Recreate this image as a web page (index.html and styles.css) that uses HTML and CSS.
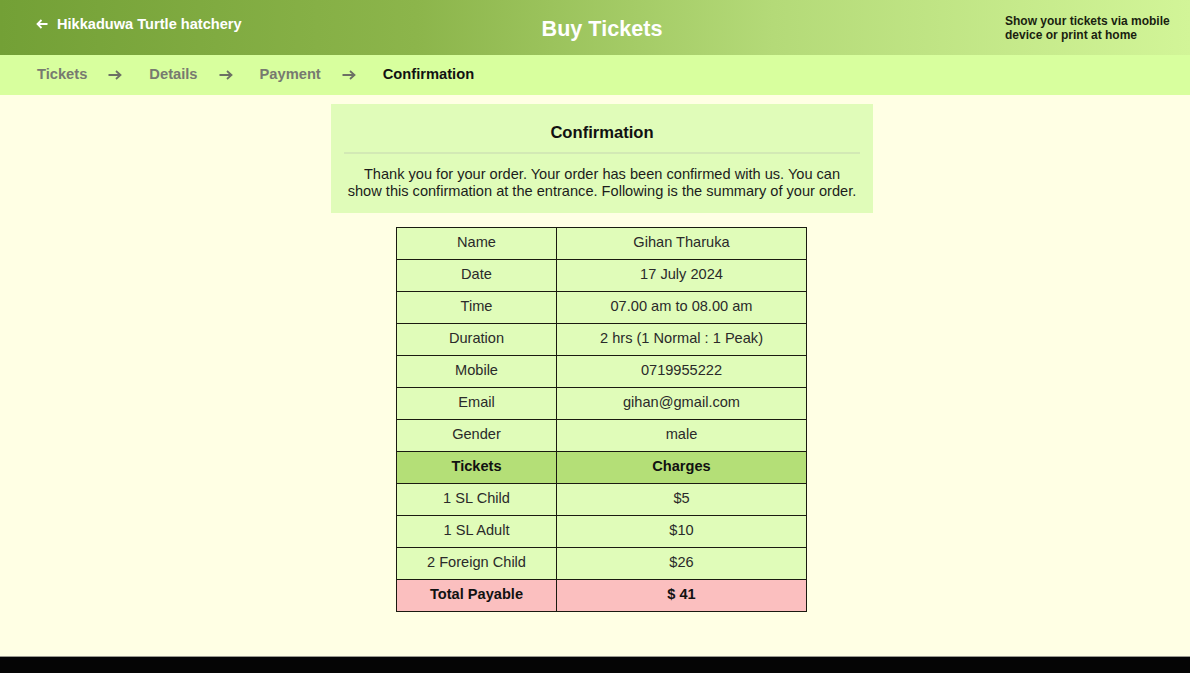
FILE: index.html
```html
<!DOCTYPE html>
<html>
<head>
<meta charset="utf-8">
<link rel="stylesheet" href="styles.css">
</head>
<body>
<div class="page">
  <header class="topbar">
    <div class="brand"><svg class="back" width="12" height="10" viewBox="0 0 12 10"><path d="M11.5 5H1.5M5.5 1L1.5 5L5.5 9" fill="none" stroke="#fff" stroke-width="1.8"/></svg>Hikkaduwa Turtle hatchery</div>
    <div class="title">Buy Tickets</div>
    <div class="note">Show your tickets via mobile device or print at home</div>
  </header>
  <nav class="steps">
    <span class="step">Tickets</span><svg class="arrow" width="14" height="10" viewBox="0 0 14 10"><path d="M0.5 5H12.5M8 1L12.5 5L8 9" fill="none" stroke="currentColor" stroke-width="1.8"/></svg>
    <span class="step">Details</span><svg class="arrow" width="14" height="10" viewBox="0 0 14 10"><path d="M0.5 5H12.5M8 1L12.5 5L8 9" fill="none" stroke="currentColor" stroke-width="1.8"/></svg>
    <span class="step">Payment</span><svg class="arrow" width="14" height="10" viewBox="0 0 14 10"><path d="M0.5 5H12.5M8 1L12.5 5L8 9" fill="none" stroke="currentColor" stroke-width="1.8"/></svg>
    <span class="step active">Confirmation</span>
  </nav>
  <main class="content">
    <section class="card">
      <h2 class="card-title">Confirmation</h2>
      <div class="rule"></div>
      <p class="card-text">Thank you for your order. Your order has been confirmed with us. You can<br>show this confirmation at the entrance. Following is the summary of your order.</p>
    </section>
    <table class="summary">
      <tr><td class="c1">Name</td><td>Gihan Tharuka</td></tr>
      <tr><td class="c1">Date</td><td>17 July 2024</td></tr>
      <tr><td class="c1">Time</td><td>07.00 am to 08.00 am</td></tr>
      <tr><td class="c1">Duration</td><td>2 hrs (1 Normal : 1 Peak)</td></tr>
      <tr><td class="c1">Mobile</td><td>0719955222</td></tr>
      <tr><td class="c1">Email</td><td>gihan@gmail.com</td></tr>
      <tr><td class="c1">Gender</td><td>male</td></tr>
      <tr class="head"><td class="c1">Tickets</td><td>Charges</td></tr>
      <tr><td class="c1">1 SL Child</td><td>$5</td></tr>
      <tr><td class="c1">1 SL Adult</td><td>$10</td></tr>
      <tr><td class="c1">2 Foreign Child</td><td>$26</td></tr>
      <tr class="total"><td class="c1">Total Payable</td><td>$ 41</td></tr>
    </table>
  </main>
  <footer class="footer"></footer>
</div>
</body>
</html>
```

FILE: styles.css
```css
* { box-sizing: border-box; }
html, body { margin: 0; padding: 0; }
body {
  font-family: "Liberation Sans", Arial, sans-serif;
  background: #ffffe4;
  width: 1190px;
  height: 673px;
  overflow: hidden;
}
.page {
  display: flex;
  flex-direction: column;
  height: 673px;
}
.topbar {
  height: 55px;
  display: flex;
  align-items: flex-start;
  background: linear-gradient(90deg, #73a036 0%, #8cb54b 35%, #b4da78 65%, #d2f598 100%);
  position: relative;
}
.brand {
  color: #fff;
  font-weight: bold;
  font-size: 14.6px;
  padding: 16px 0 0 36px;
  width: 320px;
  display: flex;
  align-items: center;
}
.back { margin-right: 9px; flex: none; }
.title {
  position: absolute;
  left: 0; right: 0;
  top: 16px;
  text-align: center;
  padding-left: 14px;
  color: #fff;
  font-weight: bold;
  font-size: 21.6px;
  pointer-events: none;
}
.note {
  margin-left: auto;
  width: 185px;
  padding: 14px 0 0 0;
  font-size: 12px;
  font-weight: bold;
  line-height: 14px;
  color: #1a1f10;
}
.steps {
  height: 40px;
  background: #d8ff9e;
  display: flex;
  align-items: center;
  padding-left: 37px;
  padding-bottom: 2px;
  font-size: 14.7px;
  font-weight: bold;
  color: #777a70;
}
.arrow {
  margin: 1px 27px 0 21px;
  color: #6c7064;
  flex: none;
}
.step.active { color: #111; }
.content {
  flex: 1;
  display: flex;
  flex-direction: column;
  align-items: center;
  padding: 9px 0 0 14px;
}
.card {
  width: 542px;
  background: #e0fcb9;
  padding: 19px 8px 13px;
  text-align: center;
}
.card-title {
  margin: 0;
  font-size: 16.6px;
  font-weight: bold;
  color: #111;
  line-height: 20px;
}
.rule {
  height: 2px;
  background: #d3e9b5;
  margin: 9px 5px 12px;
}
.card-text {
  margin: 0;
  font-size: 14.6px;
  line-height: 17px;
  color: #1c1c1c;
  white-space: nowrap;
}
.summary {
  margin-top: 14px;
  margin-right: 1px;
  border-collapse: collapse;
  width: 411px;
  font-size: 14.6px;
  color: #2a2a2a;
}
.summary td {
  border: 1px solid #1a1a10;
  background: #e0fcb9;
  height: 32px;
  padding: 0 0 4px;
  text-align: center;
}
.summary td.c1 { width: 160px; }
.summary .head td { background: #b4df77; font-weight: bold; color: #111; }
.summary .total td { background: #fbbfbf; font-weight: bold; color: #111; }
.footer {
  margin-top: auto;
  height: 17px;
  background: #050505;
  border-top: 1px solid #9a9a90;
}
```
